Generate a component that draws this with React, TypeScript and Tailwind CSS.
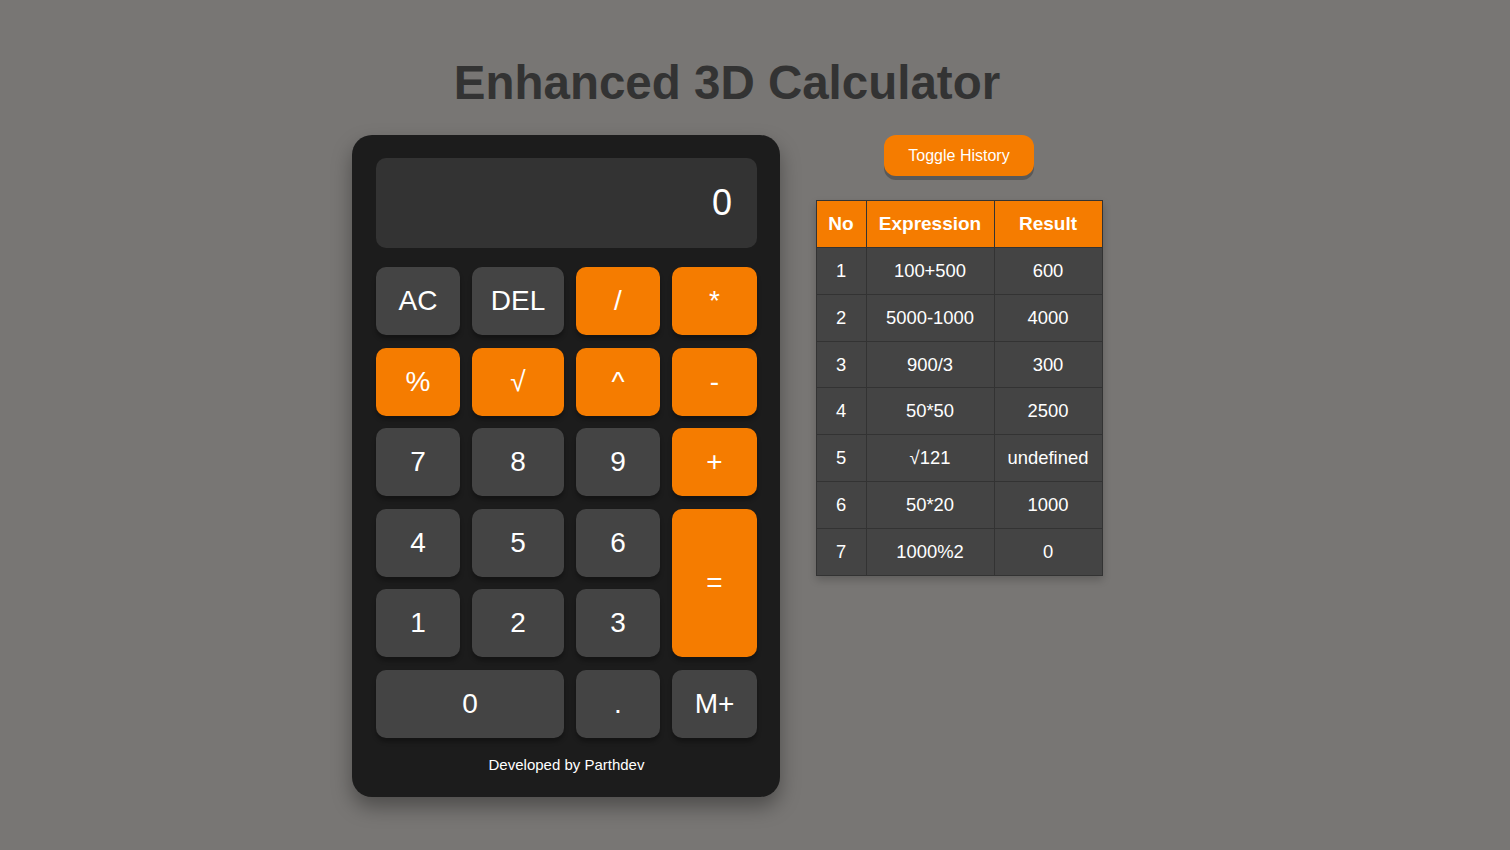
import * as React from "react";

type Key = { label: string; orange?: boolean; span?: string };

const keys: Key[] = [
  { label: "AC" },
  { label: "DEL" },
  { label: "/", orange: true },
  { label: "*", orange: true },
  { label: "%", orange: true },
  { label: "√", orange: true },
  { label: "^", orange: true },
  { label: "-", orange: true },
  { label: "7" },
  { label: "8" },
  { label: "9" },
  { label: "+", orange: true },
  { label: "4" },
  { label: "5" },
  { label: "6" },
  { label: "=", orange: true, span: "row-span-2" },
  { label: "1" },
  { label: "2" },
  { label: "3" },
  { label: "0", span: "col-span-2" },
  { label: "." },
  { label: "M+" },
];

const history = [
  ["1", "100+500", "600"],
  ["2", "5000-1000", "4000"],
  ["3", "900/3", "300"],
  ["4", "50*50", "2500"],
  ["5", "√121", "undefined"],
  ["6", "50*20", "1000"],
  ["7", "1000%2", "0"],
];

export default function App() {
  return (
    <div className="min-h-screen bg-[#787674] font-['Liberation_Sans',Arial,sans-serif] flex flex-col items-center pt-[55px]">
      <div className="w-[750px] mr-[56px] flex flex-col">
        <h1 className="text-center text-[47.5px] leading-[55px] font-bold text-[#333333]">Enhanced 3D Calculator</h1>
        <div className="flex items-start gap-[36px] mt-[25px]">
          <div className="w-[428px] bg-[#1c1c1c] rounded-[20px] pt-[23px] pl-[24px] pr-[23px] pb-[24px] shadow-[0_10px_20px_rgba(0,0,0,0.35)]">
            <div className="h-[90px] bg-[#333333] rounded-[10px] flex items-center justify-end pr-[25px] text-white text-[36px]">
              0
            </div>
            <div className="grid grid-cols-[84px_92px_84px_85px] auto-rows-[68px] gap-x-3 gap-y-[12.6px] mt-[19px]">
              {keys.map((k) => (
                <div
                  key={k.label}
                  className={`${k.span ?? ""} ${
                    k.orange ? "bg-[#f57c00]" : "bg-[#444444]"
                  } rounded-[10px] flex items-center justify-center text-white text-[28px] shadow-[0_4px_4px_rgba(0,0,0,0.3)]`}
                >
                  {k.label}
                </div>
              ))}
            </div>
            <p className="text-center text-white text-[15px] leading-[17px] mt-[18px]">Developed by Parthdev</p>
          </div>
          <div className="w-[286px] flex flex-col items-center">
            <button className="h-[41px] px-[24px] rounded-[12px] bg-[#f57c00] text-white text-[16px] shadow-[0_4px_0_#5a5958]">
              Toggle History
            </button>
            <table className="mt-[24px] w-[286px] border-collapse border border-[#333333] text-white text-center table-fixed shadow-[0_4px_8px_rgba(0,0,0,0.2)]">
              <colgroup>
                <col className="w-[50px]" />
                <col className="w-[128px]" />
                <col className="w-[108px]" />
              </colgroup>
              <thead>
                <tr className="bg-[#f57c00] h-[47px] text-[19px] font-bold">
                  <th className="border border-[#333333]">No</th>
                  <th className="border border-[#333333]">Expression</th>
                  <th className="border border-[#333333]">Result</th>
                </tr>
              </thead>
              <tbody>
                {history.map((r) => (
                  <tr key={r[0]} className="bg-[#444444] h-[46.8px] text-[18.4px]">
                    {r.map((c, i) => (
                      <td key={i} className="border border-[#333333] px-0">
                        {c}
                      </td>
                    ))}
                  </tr>
                ))}
              </tbody>
            </table>
          </div>
        </div>
      </div>
    </div>
  );
}
